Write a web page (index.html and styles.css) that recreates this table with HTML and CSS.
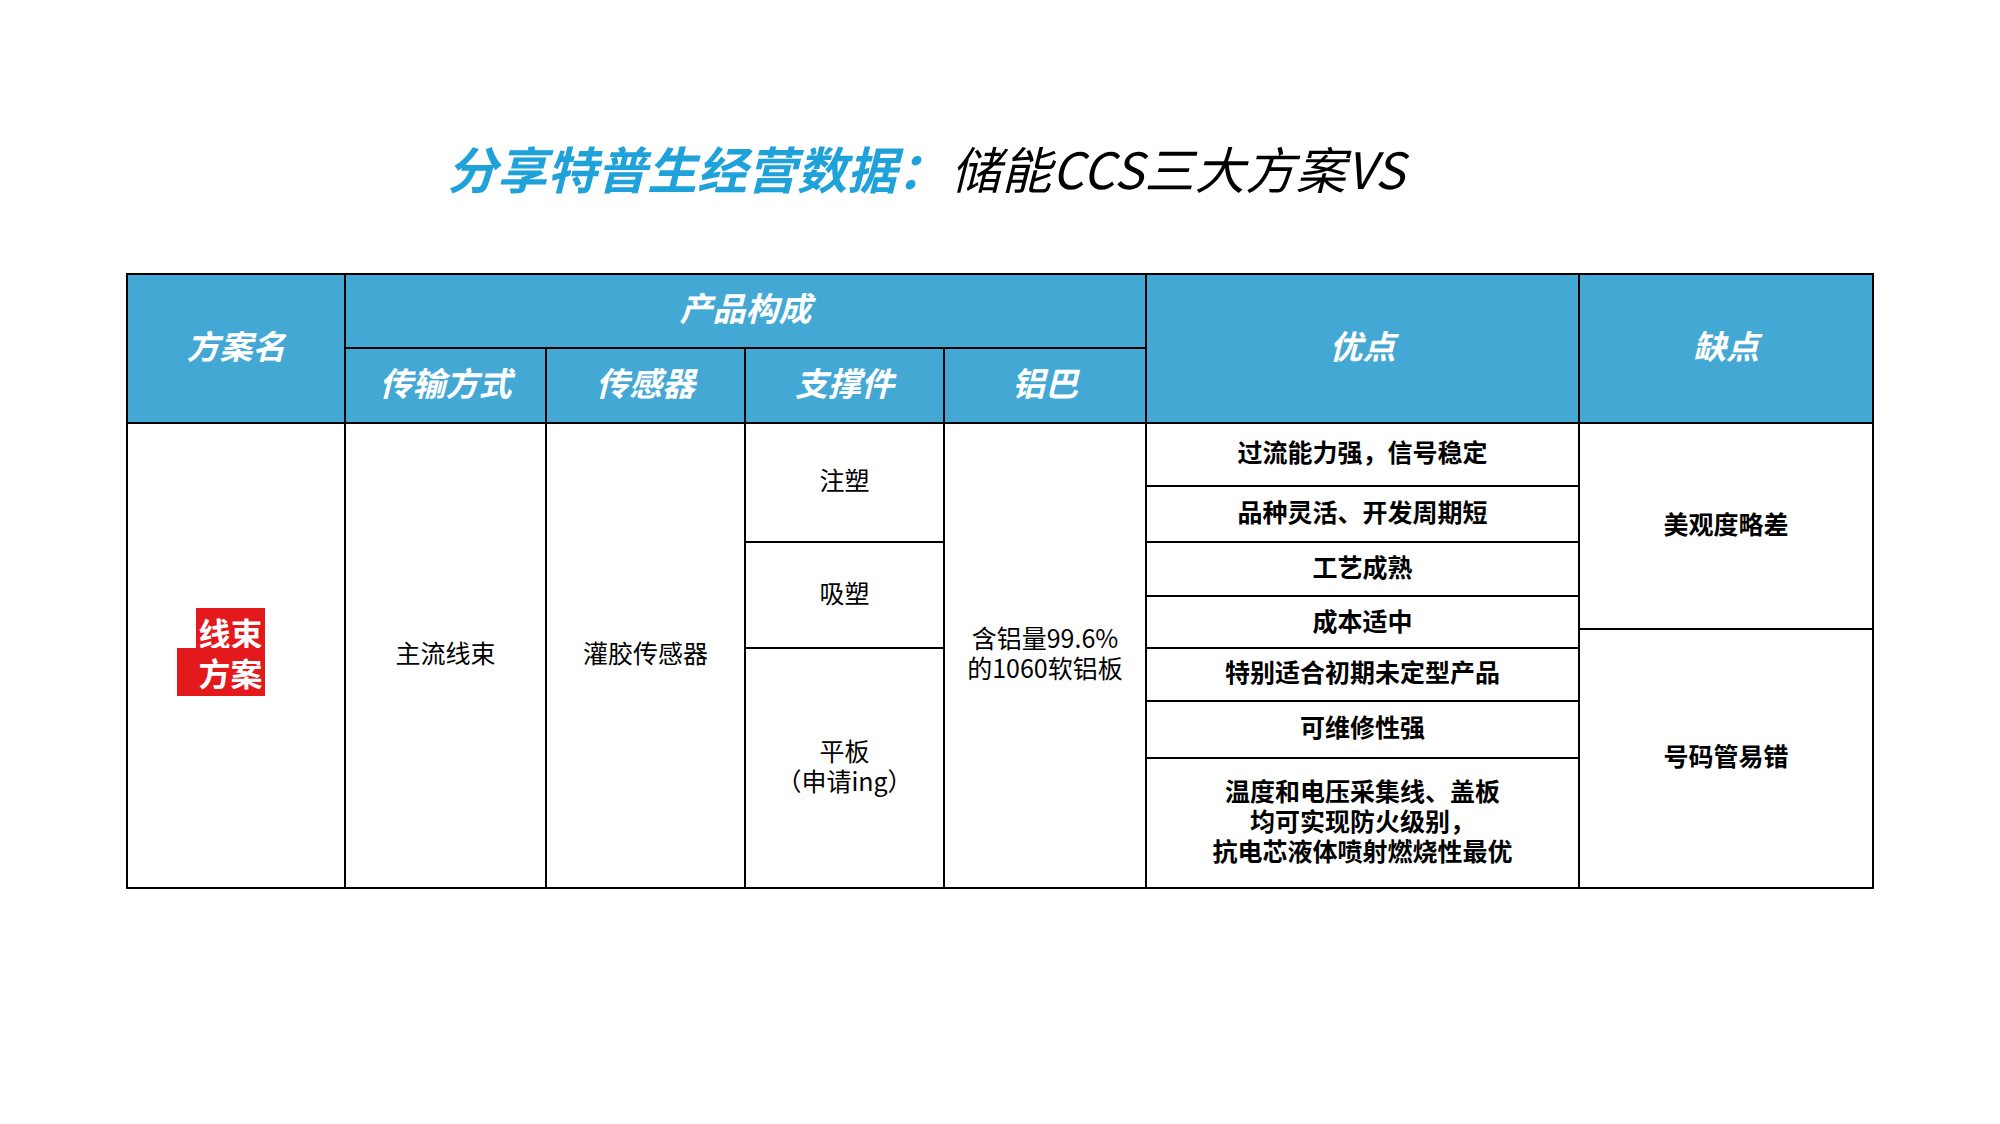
FILE: index.html
```html
<!DOCTYPE html>
<html lang="zh-CN">
<head>
<meta charset="utf-8">
<title>储能CCS三大方案VS</title>
<link rel="stylesheet" href="styles.css">
</head>
<body>
<div class="slide">
  <h1 class="title"><span class="title-blue">分享特普生经营数据：</span><span class="title-black">储能CCS三大方案VS</span></h1>
  <div class="grid">
    <div class="hd c1 rh">方案名</div>
    <div class="hd c2-5 r1">产品构成</div>
    <div class="hd c2 r2">传输方式</div>
    <div class="hd c3 r2">传感器</div>
    <div class="hd c4 r2">支撑件</div>
    <div class="hd c5 r2">铝巴</div>
    <div class="hd c6 rh">优点</div>
    <div class="hd c7 rh">缺点</div>

    <div class="cell c1 rb">
      <div class="badge"><span class="b1">线束</span><span class="b2">方案</span></div>
    </div>
    <div class="cell c2 rb">主流线束</div>
    <div class="cell c3 rb">灌胶传感器</div>
    <div class="cell c4 s1">注塑</div>
    <div class="cell c4 s2">吸塑</div>
    <div class="cell c4 s3">平板<br>（申请ing）</div>
    <div class="cell c5 rb">含铝量99.6%<br>的1060软铝板</div>

    <div class="cell bold c6 p1">过流能力强，信号稳定</div>
    <div class="cell bold c6 p2">品种灵活、开发周期短</div>
    <div class="cell bold c6 p3">工艺成熟</div>
    <div class="cell bold c6 p4">成本适中</div>
    <div class="cell bold c6 p5">特别适合初期未定型产品</div>
    <div class="cell bold c6 p6">可维修性强</div>
    <div class="cell bold c6 p7">温度和电压采集线、盖板<br>均可实现防火级别，<br>抗电芯液体喷射燃烧性最优</div>

    <div class="cell bold c7 n1">美观度略差</div>
    <div class="cell bold c7 n2">号码管易错</div>
  </div>
</div>
</body>
</html>
```

FILE: styles.css
```css
* { box-sizing: border-box; }
html, body { margin: 0; padding: 0; background: #ffffff; }
body {
  width: 2000px;
  height: 1124px;
  font-family: "Noto Sans CJK SC", "Noto Sans", sans-serif;
  color: #000;
}
.slide {
  width: 2000px;
  height: 1124px;
  padding-top: 138px;
}
.title {
  margin: 0 0 77px 0;
  padding-left: 447px;
  font-size: 50px;
  line-height: 58px;
  height: 58px;
  font-style: italic;
  white-space: nowrap;
  letter-spacing: 0;
}
.title-blue { color: #1fa2da; font-weight: 700; }
.title-black { color: #000; font-weight: 400; letter-spacing: 0.5px; margin-left: 4px; }

.grid {
  width: 1748px;
  margin: 0 auto;
  display: grid;
  grid-template-columns: 216px 199px 197px 197px 200px 431px 292px;
  grid-template-rows: 72px 73px 61px 54px 52px 31px 17px 51px 55px 128px;
  gap: 2px;
  padding: 2px;
  background: #000;
}
.hd {
  background: #44a8d4;
  color: #fff;
  font-weight: 700;
  font-style: italic;
  font-size: 33px;
  display: flex;
  align-items: center;
  justify-content: center;
  padding-bottom: 8px;
}
.cell {
  background: #fff;
  font-size: 25px;
  line-height: 30px;
  display: flex;
  align-items: center;
  justify-content: center;
  text-align: center;
  padding-bottom: 7px;
}
.bold { font-weight: 700; }

.c1 { grid-column: 1; }
.c2 { grid-column: 2; }
.c3 { grid-column: 3; }
.c4 { grid-column: 4; }
.c5 { grid-column: 5; }
.c2-5 { grid-column: 2 / 6; }
.c6 { grid-column: 6; }
.c7 { grid-column: 7; }

.rh { grid-row: 1 / 3; }
.r1 { grid-row: 1; }
.r2 { grid-row: 2; }
.rb { grid-row: 3 / 11; }

.s1 { grid-row: 3 / 5; }
.s2 { grid-row: 5 / 8; }
.s3 { grid-row: 8 / 11; }

.p1 { grid-row: 3; }
.p2 { grid-row: 4; }
.p3 { grid-row: 5; }
.p4 { grid-row: 6 / 8; padding-bottom: 4px; }
.p5 { grid-row: 8; }
.p6 { grid-row: 9; }
.p7 { grid-row: 10; }

.n1 { grid-row: 3 / 7; }
.n2 { grid-row: 7 / 11; }

.c1.rb { padding-bottom: 0; }
.badge {
  display: flex;
  flex-direction: column;
  align-items: flex-end;
  margin-right: 30px;
  margin-bottom: 7px;
  color: #fff;
  font-weight: 700;
  font-size: 32px;
  letter-spacing: 0;
}
.badge span {
  display: block;
  background: #e3191c;
  padding-right: 2px;
  padding-left: 2px;
}
.b1 {
  height: 40px;
  line-height: 40px;
  padding-top: 4px;
}
.b2 {
  height: 48px;
  line-height: 48px;
  padding-top: 0;
  padding-left: 21px !important;
}
```
